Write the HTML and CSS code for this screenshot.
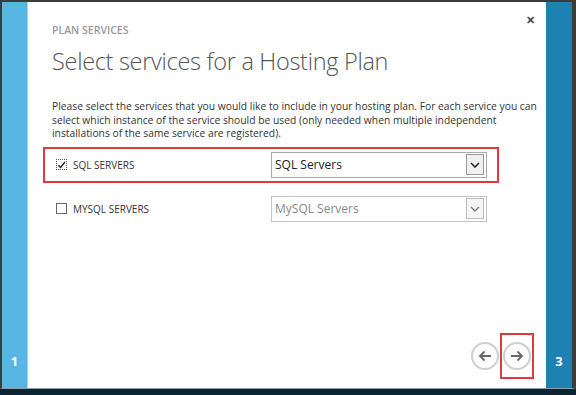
FILE: index.html
```html
<!DOCTYPE html>
<html lang="en">
  <head>
    <meta charset="UTF-8" />
    <title>Plan Services</title>
    <link rel="stylesheet" href="styles.css">
  </head>
  <body>
    <div class="wizard">
      <div class="step step-done">1</div>
      <div class="panel">
        <button class="close" title="Close">&#x2715;</button>
        <div class="eyebrow">PLAN SERVICES</div>
        <h1>Select services for a Hosting Plan</h1>
        <p class="intro">
          Please select the services that you would like to include in your hosting plan. For each service you can
          select which instance of the service should be used (only needed when multiple independent
          installations of the same service are registered).
        </p>

        <div class="service highlight">
          <label class="check">
            <span class="box checked">
              <svg width="10" height="10" viewBox="0 0 10 10"><path d="M1.5 5.2 L4 7.8 L8.8 1.6" fill="none" stroke="#222" stroke-width="1.6"/></svg>
            </span>
            SQL SERVERS
          </label>
          <div class="select">
            <span>SQL Servers</span>
            <span class="arrow">
              <svg width="10" height="6" viewBox="0 0 10 6"><path d="M1 1 L5 5 L9 1" fill="none" stroke="#222" stroke-width="1.6"/></svg>
            </span>
          </div>
        </div>

        <div class="service">
          <label class="check">
            <span class="box"></span>
            MYSQL SERVERS
          </label>
          <div class="select disabled">
            <span>MySQL Servers</span>
            <span class="arrow">
              <svg width="10" height="6" viewBox="0 0 10 6"><path d="M1 1 L5 5 L9 1" fill="none" stroke="#777" stroke-width="1.4"/></svg>
            </span>
          </div>
        </div>

        <div class="nav">
          <button class="circle">
            <svg width="14" height="12" viewBox="0 0 14 12"><path d="M13 6 H2 M6.5 1.5 L2 6 L6.5 10.5" fill="none" stroke="#666" stroke-width="1.8"/></svg>
          </button>
          <div class="next-wrap">
            <button class="circle">
              <svg width="14" height="12" viewBox="0 0 14 12"><path d="M1 6 H12 M7.5 1.5 L12 6 L7.5 10.5" fill="none" stroke="#666" stroke-width="1.8"/></svg>
            </button>
          </div>
        </div>
      </div>
      <div class="step step-next">3</div>
    </div>
  </body>
</html>
```

FILE: styles.css
```css
body {
  margin: 0;
  background-color: #0b2431;
  font-family: "Open Sans", "Noto Sans", Arial, sans-serif;
}
.wizard {
  display: flex;
  height: 386px;
  border-top: 2px solid #3b3b3b;
  border-left: 2px solid #3b3b3b;
  border-right: 4px solid #3b3b3b;
  border-bottom: 1px solid #8d9ca4;
}
.step {
  width: 25px;
  display: flex;
  align-items: flex-end;
  justify-content: center;
  padding-bottom: 18px;
  box-sizing: border-box;
  color: #fff;
  font-weight: bold;
  font-size: 13px;
}
.step-done {
  background-color: #58b6e5;
  border-right: 1px solid #9dd6f1;
  width: 26px;
}
.step-next {
  background-color: #1d82b3;
  width: 26px;
}
.panel {
  flex: 1;
  position: relative;
  background-color: #fff;
  padding: 21px 0 0 24px;
  color: #333;
}
.close {
  position: absolute;
  top: 12px;
  right: 11px;
  border: none;
  background: none;
  font-size: 11px;
  font-weight: bold;
  color: #444;
  padding: 0;
}
.eyebrow {
  font-size: 10.5px;
  line-height: 14px;
  font-weight: 600;
  color: #999;
}
h1 {
  margin: 9px 0 0;
  font-size: 23.5px;
  line-height: 30px;
  font-weight: 300;
  color: #555;
  letter-spacing: -0.3px;
}
.intro {
  margin: 24px 0 0;
  font-size: 10.3px;
  line-height: 13.5px;
  color: #333;
  width: 490px;
}
.service {
  display: flex;
  align-items: center;
  margin: 6px 0 0 -9px;
  padding: 3px 10px 3px 11px;
  width: 431px;
  border: 2px solid transparent;
  justify-content: space-between;
}
.service + .service {
  margin-top: 8px;
}
.service.highlight {
  border-color: #e03a3e;
}
.check {
  display: flex;
  align-items: center;
  gap: 6px;
  font-size: 10px;
  color: #333;
}
.box {
  width: 9px;
  height: 9px;
  border: 1px solid #666;
  display: flex;
  align-items: center;
  justify-content: center;
}
.box.checked {
  border: 1px dotted #555;
}
.select {
  width: 211px;
  height: 24px;
  border: 1px solid #aaa;
  display: flex;
  align-items: center;
  justify-content: space-between;
  padding-left: 3px;
  font-size: 12px;
  color: #222;
}
.select.disabled {
  color: #888;
  border-color: #c4c4c4;
}
.arrow {
  width: 16px;
  height: 19px;
  margin-right: 2px;
  border: 1px solid #999;
  background-color: #f0f0f0;
  display: flex;
  align-items: center;
  justify-content: center;
}
.select.disabled .arrow {
  border-color: #bbb;
  background-color: #f6f6f6;
}
.nav {
  position: absolute;
  right: 12px;
  bottom: 9px;
  display: flex;
  align-items: center;
  gap: 1px;
}
.circle {
  width: 28px;
  height: 28px;
  border-radius: 50%;
  border: 2px solid #cfcfcf;
  background: #fff;
  display: flex;
  align-items: center;
  justify-content: center;
  padding: 0;
}
.next-wrap {
  border: 2px solid #e03a3e;
  padding: 7px 1px;
}
```
